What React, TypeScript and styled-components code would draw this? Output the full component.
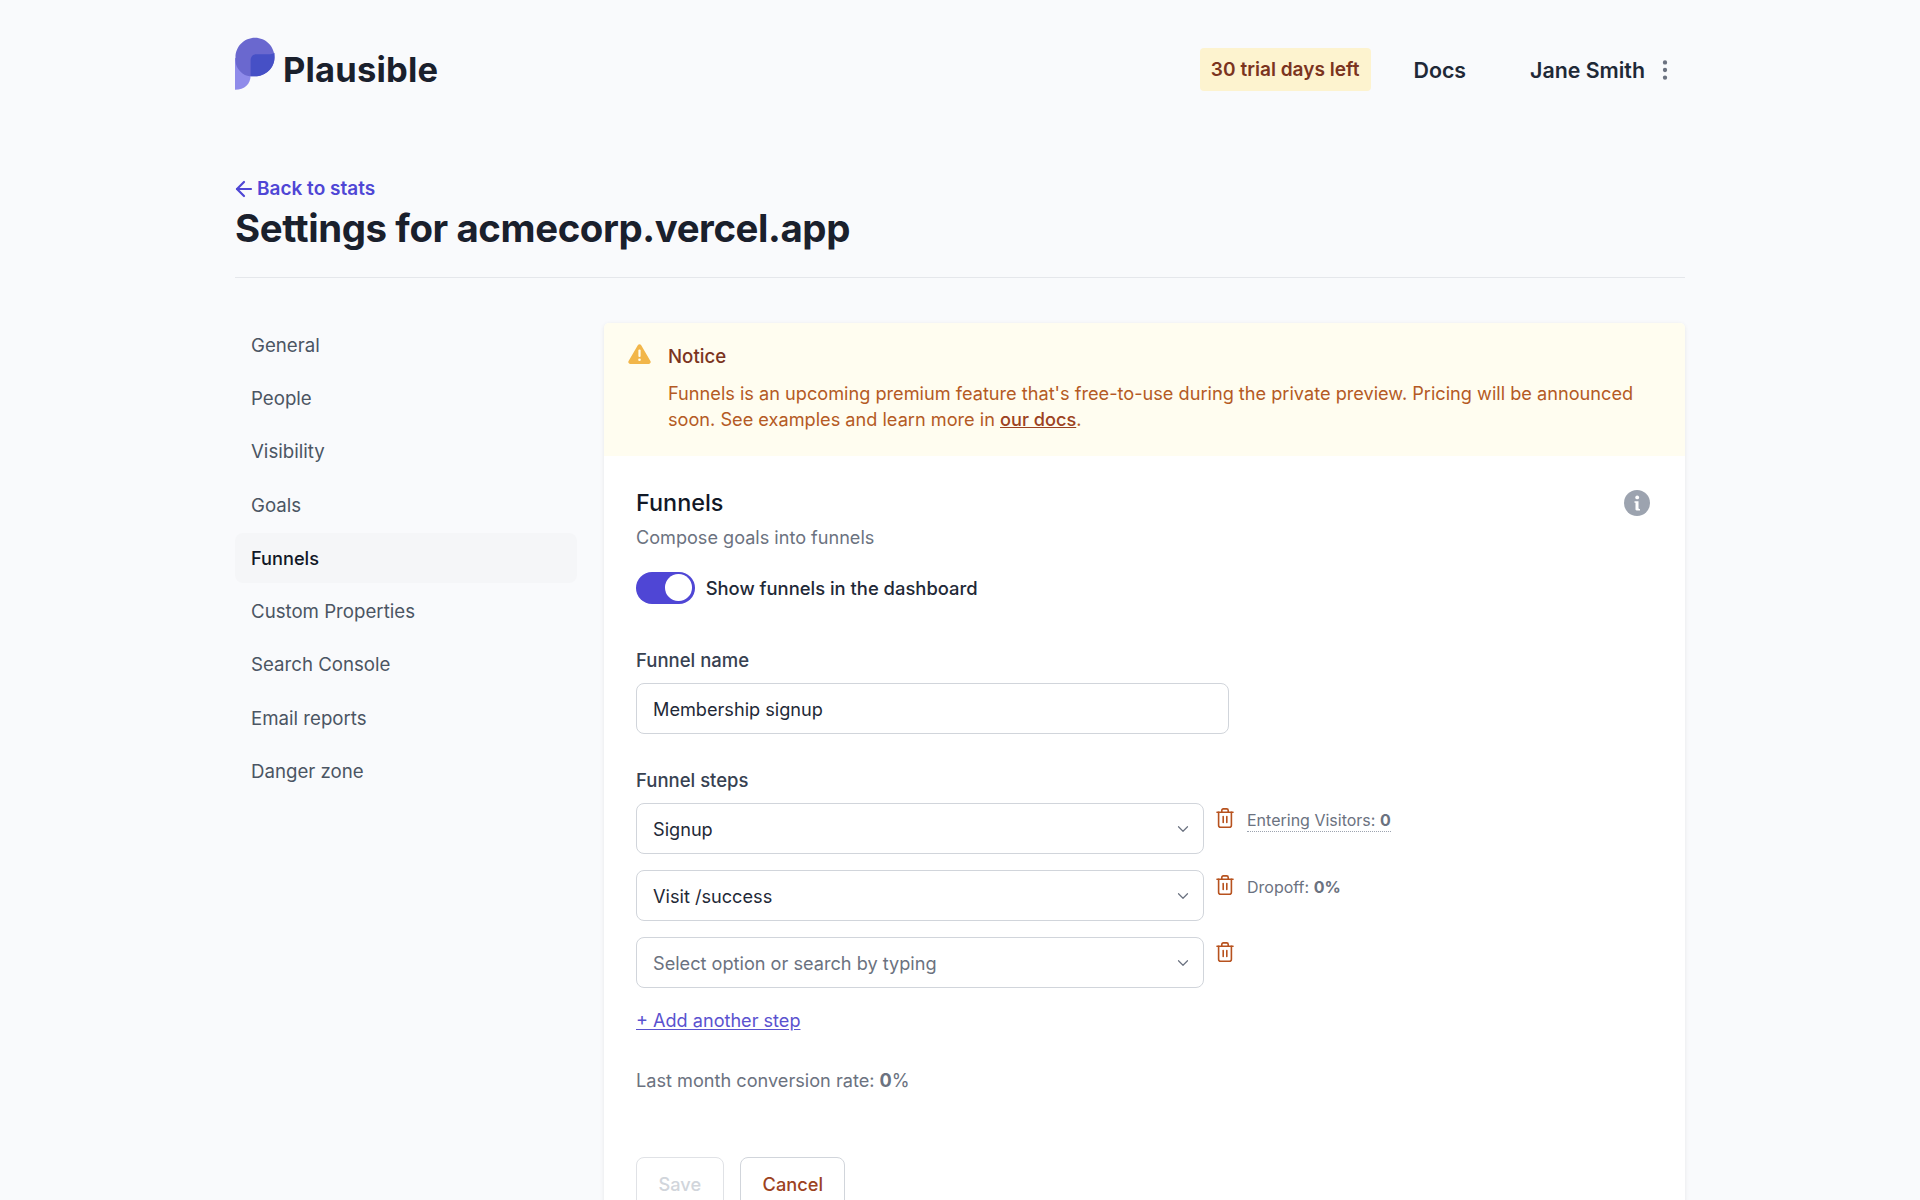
import styled, { createGlobalStyle } from "styled-components";
import { ArrowLeft, ChevronDown, EllipsisVertical } from "lucide-react";

const GlobalStyle = createGlobalStyle`
  html, body {
    margin: 0;
    height: 1200px;
    overflow: hidden;
    background-color: #f9fafc;
    font-family: Inter, "Liberation Sans", sans-serif;
  }
  * {
    box-sizing: border-box;
  }
`;

const Page = styled.div`
  width: 1450px;
  margin: 0 auto;
`;

const Header = styled.header`
  height: 140px;
  display: flex;
  align-items: center;
  justify-content: space-between;
`;

const Brand = styled.div`
  display: flex;
  align-items: center;
  gap: 8px;
  font-size: 34.5px;
  font-weight: 700;
  color: #1a202c;
  letter-spacing: 0.2px;

  svg {
    margin-bottom: 13px;
  }

  span {
    margin-bottom: 2px;
  }
`;

const HeaderNav = styled.nav`
  display: flex;
  align-items: center;
  font-size: 21.33px;
  font-weight: 600;
  color: #1f2937;
`;

const TrialBadge = styled.div`
  background-color: #fdf3cf;
  color: #7b341e;
  font-size: 19.1px;
  border-radius: 4px;
  height: 43px;
  padding: 0 11px;
  display: flex;
  align-items: center;
  margin-right: 43px;
  margin-bottom: 2px;
`;

const DocsLink = styled.a`
  margin-right: 64px;
`;

const UserMenu = styled.div`
  display: flex;
  align-items: center;
  gap: 7px;
  margin-right: 7px;

  svg {
    color: #6b7280;
  }
`;

const TitleBlock = styled.div`
  margin-top: 36px;
  padding-bottom: 25px;
  border-bottom: 1px solid #e5e7eb;
`;

const BackLink = styled.a`
  display: flex;
  align-items: center;
  color: #4f46d5;
  font-size: 19px;
  font-weight: 600;
  line-height: 26px;
  margin-bottom: 2px;

  svg {
    margin-left: -3px;
    margin-right: 1px;
  }
`;

const PageTitle = styled.h1`
  margin: 0;
  font-size: 38.4px;
  line-height: 48px;
  font-weight: 700;
  color: #1a202c;
  letter-spacing: -0.4px;
`;

const Columns = styled.div`
  display: flex;
  align-items: flex-start;
  margin-top: 42px;
`;

const Sidebar = styled.nav`
  width: 342px;
  margin-right: 27px;
  flex-shrink: 0;
  display: flex;
  flex-direction: column;
  gap: 3px;
`;

const SideItem = styled.a<{ $active?: boolean }>`
  height: 50.3px;
  display: flex;
  align-items: center;
  padding-left: 16px;
  font-size: ${(p) => (p.$active ? 18.2 : 18.67)}px;
  border-radius: 8px;
  color: ${(p) => (p.$active ? "#111827" : "#4b5563")};
  background-color: ${(p) => (p.$active ? "#f5f6f8" : "transparent")};
  font-weight: ${(p) => (p.$active ? 500 : 400)};
`;

const Panel = styled.main`
  flex: 1;
  margin-top: 3px;
  background-color: #fff;
  border-radius: 5px 5px 0 0;
  box-shadow: 0 1px 4px rgba(0, 0, 0, 0.08);
`;

const Notice = styled.div`
  background-color: #fffdf0;
  height: 133px;
  padding: 21px 24px;
  display: flex;
  gap: 17px;
  border-radius: 5px 5px 0 0;
`;

const NoticeText = styled.div`
  flex: 1;
`;

const NoticeTitle = styled.div`
  color: #7b341e;
  font-size: 18.67px;
  font-weight: 500;
  line-height: 26.67px;
  margin-bottom: 9px;
`;

const NoticeBody = styled.div`
  color: #b45a24;
  font-size: 18.16px;
  line-height: 26.67px;
`;

const NoticeLink = styled.a`
  color: #9c4221;
  font-weight: 500;
  text-decoration: underline;
`;

const PanelBody = styled.div`
  padding: 31px 32px 0;
`;

const TitleRow = styled.div`
  display: flex;
  justify-content: space-between;
  align-items: flex-start;

  svg {
    margin: 3px 3px 0 0;
  }
`;

const SectionTitle = styled.h2`
  margin: 0;
  font-size: 23.4px;
  font-weight: 500;
  line-height: 32px;
  color: #111827;
`;

const SectionHint = styled.p`
  margin: 5px 0 0;
  font-size: 18.1px;
  line-height: 26.67px;
  color: #6b7280;
`;

const ToggleRow = styled.div`
  display: flex;
  align-items: center;
  gap: 11px;
  margin-top: 21px;
  font-size: 18.4px;
  font-weight: 500;
  color: #1f2937;
`;

const Toggle = styled.div`
  width: 58.67px;
  height: 32px;
  border-radius: 16px;
  background-color: #4f46d5;
  display: flex;
  align-items: center;
  justify-content: flex-end;
  padding-right: 3px;
`;

const ToggleKnob = styled.div`
  width: 26.67px;
  height: 26.67px;
  border-radius: 50%;
  background-color: #fff;
`;

const FieldLabel = styled.div<{ $top: number }>`
  margin-top: ${(p) => p.$top}px;
  margin-bottom: 10px;
  font-size: 18.5px;
  line-height: 26.67px;
  font-weight: 500;
  color: #374151;
`;

const TextBox = styled.div`
  width: 593px;
  height: 51px;
  border: 1.33px solid #d1d5db;
  border-radius: 8px;
  background-color: #fff;
  display: flex;
  align-items: center;
  padding: 0 16px;
  font-size: 18.15px;
  color: #1f2937;
`;

const StepList = styled.div`
  display: flex;
  flex-direction: column;
  gap: 16.5px;
`;

const StepRow = styled.div`
  display: flex;
  align-items: flex-start;
`;

const SelectBox = styled.div<{ $placeholder?: boolean }>`
  width: 568px;
  height: 50.5px;
  border: 1.33px solid #d1d5db;
  border-radius: 8px;
  background-color: #fff;
  display: flex;
  align-items: center;
  justify-content: space-between;
  padding: 0 11px 0 16px;
  font-size: 18.15px;
  color: ${(p) => (p.$placeholder ? "#6b7280" : "#1f2937")};

  svg {
    color: #6b7280;
  }
`;

const TrashButton = styled.div`
  width: 18px;
  height: 20px;
  margin: 5px 0 0 12px;
  color: #b7521e;
`;

const StepStat = styled.span<{ $dotted?: boolean }>`
  margin: 7px 0 0 13px;
  font-size: 16px;
  line-height: 20px;
  color: #6b7280;
  padding-bottom: 1px;
  border-bottom: ${(p) => (p.$dotted ? "1.5px dotted #9ca3af" : "none")};

  b {
    font-weight: 700;
  }
`;

const AddStep = styled.a`
  display: block;
  margin-top: 19px;
  color: #5a52cf;
  font-size: 18.1px;
  line-height: 26.67px;
  text-decoration: underline;
  text-underline-offset: 2px;
`;

const Conversion = styled.p`
  margin: 34px 0 0;
  font-size: 18.15px;
  line-height: 26.67px;
  color: #6b7280;

  b {
    font-weight: 700;
  }
`;

const Actions = styled.div`
  display: flex;
  gap: 16.5px;
  margin-top: 63px;
`;

const ActionButton = styled.button<{ $disabled?: boolean }>`
  height: 53px;
  padding: 0 21.5px;
  background-color: #fff;
  border: 1.33px solid ${(p) => (p.$disabled ? "#e0e2e6" : "#d1d5db")};
  border-radius: 8px;
  font-family: inherit;
  font-size: 18.2px;
  font-weight: 500;
  color: ${(p) => (p.$disabled ? "#d1d5db" : "#9c4221")};
`;

const sideItems = [
  "General",
  "People",
  "Visibility",
  "Goals",
  "Funnels",
  "Custom Properties",
  "Search Console",
  "Email reports",
  "Danger zone",
];

const Logo = () => (
  <svg width="40" height="54" viewBox="0 0 41 55">
    <path d="M0 21 C0 32 0 43 0 54 C10 54 16 48 16 39 L16 30 Z" fill="#8f8bea" />
    <path
      d="M20.5 0.5 C31.5 0.5 40.5 9.5 40.5 20.5 C40.5 31.5 31.5 40 20.5 40 C15 40 16 40 15 40 C9 40 0.5 33 0.5 24 L0.5 20.5 C0.5 9.5 9.5 0.5 20.5 0.5 Z"
      fill="#6a68cf"
    />
    <path
      d="M40.5 16 L40.5 20.5 C40.5 31.5 31.5 40 20.5 40 L16 40 L16 24 C16 20 18.5 17.5 22 17.5 L36 17.5 C38 17.5 39.5 17 40.5 16 Z"
      fill="#4650c6"
    />
  </svg>
);

const WarningIcon = () => (
  <svg width="23" height="20" viewBox="0 0 23 20">
    <path
      d="M9.8 1.2 C10.6 -0.2 12.4 -0.2 13.2 1.2 L22.4 17 C23.2 18.4 22.3 20 20.7 20 L2.3 20 C0.7 20 -0.2 18.4 0.6 17 Z"
      fill="#f2b64a"
    />
    <rect x="10.4" y="5.5" width="2.2" height="7.5" rx="1" fill="#fffdf0" />
    <circle cx="11.5" cy="15.8" r="1.3" fill="#fffdf0" />
  </svg>
);

const InfoIcon = () => (
  <svg width="26" height="26" viewBox="0 0 26 26">
    <circle cx="13" cy="13" r="13" fill="#9ca3af" />
    <circle cx="13.2" cy="7.4" r="1.9" fill="#fff" />
    <path
      d="M10.5 11.3 L14.5 11.3 L14.5 18 C14.5 18.8 15 19 16 19 L16 20.4 L12.6 20.4 C11.8 20.4 11.5 20 11.5 19 L11.5 12.8 L10.5 12.8 Z"
      fill="#fff"
    />
  </svg>
);

const TrashIcon = () => (
  <svg width="18" height="20" viewBox="0 0 18 20" fill="none" stroke="currentColor" strokeWidth="1.6" strokeLinecap="round" strokeLinejoin="round">
    <path d="M1 4.2 L17 4.2" />
    <path d="M5.8 4.2 L5.8 2.4 C5.8 1.4 6.4 0.9 7.3 0.9 L10.7 0.9 C11.6 0.9 12.2 1.4 12.2 2.4 L12.2 4.2" />
    <path d="M2.6 4.2 L2.6 17.2 C2.6 18.4 3.4 19.2 4.6 19.2 L13.4 19.2 C14.6 19.2 15.4 18.4 15.4 17.2 L15.4 4.2" />
    <path d="M7.2 8.5 L7.2 14.5" />
    <path d="M10.8 8.5 L10.8 14.5" />
  </svg>
);

const App = () => {
  return (
    <>
      <GlobalStyle />
      <Page>
        <Header>
          <Brand>
            <Logo />
            <span>Plausible</span>
          </Brand>
          <HeaderNav>
            <TrialBadge>30 trial days left</TrialBadge>
            <DocsLink>Docs</DocsLink>
            <UserMenu>
              Jane Smith
              <EllipsisVertical size={26} />
            </UserMenu>
          </HeaderNav>
        </Header>

        <TitleBlock>
          <BackLink>
            <ArrowLeft size={24} strokeWidth={2.2} />
            Back to stats
          </BackLink>
          <PageTitle>Settings for acmecorp.vercel.app</PageTitle>
        </TitleBlock>

        <Columns>
          <Sidebar>
            {sideItems.map((item) => (
              <SideItem key={item} $active={item === "Funnels"}>
                {item}
              </SideItem>
            ))}
          </Sidebar>

          <Panel>
            <Notice>
              <WarningIcon />
              <NoticeText>
                <NoticeTitle>Notice</NoticeTitle>
                <NoticeBody>
                  Funnels is an upcoming premium feature that's free-to-use during the private preview. Pricing will be
                  announced soon. See examples and learn more in <NoticeLink>our docs</NoticeLink>.
                </NoticeBody>
              </NoticeText>
            </Notice>

            <PanelBody>
              <TitleRow>
                <div>
                  <SectionTitle>Funnels</SectionTitle>
                  <SectionHint>Compose goals into funnels</SectionHint>
                </div>
                <InfoIcon />
              </TitleRow>

              <ToggleRow>
                <Toggle>
                  <ToggleKnob />
                </Toggle>
                Show funnels in the dashboard
              </ToggleRow>

              <FieldLabel $top={43}>Funnel name</FieldLabel>
              <TextBox>Membership signup</TextBox>

              <FieldLabel $top={32.3}>Funnel steps</FieldLabel>
              <StepList>
                <StepRow>
                  <SelectBox>
                    Signup
                    <ChevronDown size={18} strokeWidth={1.6} />
                  </SelectBox>
                  <TrashButton>
                    <TrashIcon />
                  </TrashButton>
                  <StepStat $dotted>
                    Entering Visitors: <b>0</b>
                  </StepStat>
                </StepRow>
                <StepRow>
                  <SelectBox>
                    Visit /success
                    <ChevronDown size={18} strokeWidth={1.6} />
                  </SelectBox>
                  <TrashButton>
                    <TrashIcon />
                  </TrashButton>
                  <StepStat>
                    Dropoff: <b>0%</b>
                  </StepStat>
                </StepRow>
                <StepRow>
                  <SelectBox $placeholder>
                    Select option or search by typing
                    <ChevronDown size={18} strokeWidth={1.6} />
                  </SelectBox>
                  <TrashButton>
                    <TrashIcon />
                  </TrashButton>
                </StepRow>
              </StepList>

              <AddStep>+ Add another step</AddStep>
              <Conversion>
                Last month conversion rate: <b>0</b>%
              </Conversion>

              <Actions>
                <ActionButton $disabled>Save</ActionButton>
                <ActionButton>Cancel</ActionButton>
              </Actions>
            </PanelBody>
          </Panel>
        </Columns>
      </Page>
    </>
  );
};

export default App;
